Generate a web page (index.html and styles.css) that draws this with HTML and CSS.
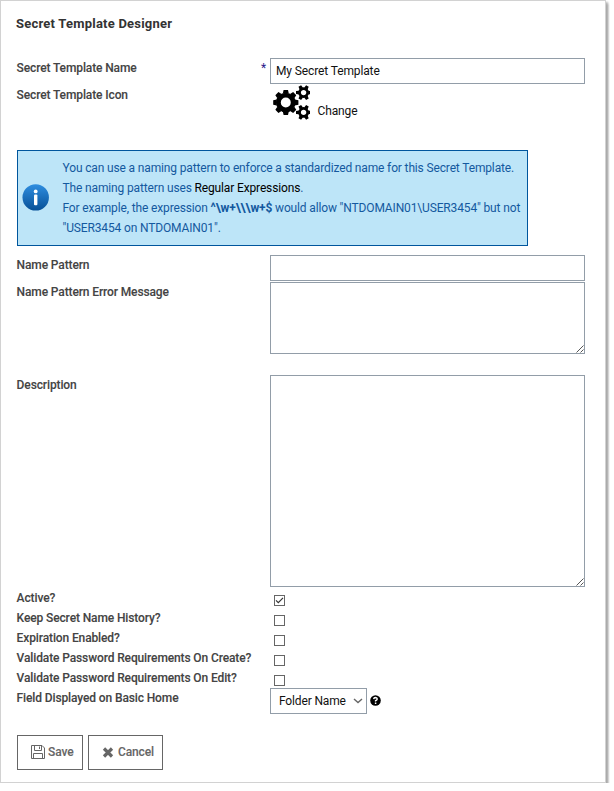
FILE: index.html
```html
<!DOCTYPE html>
<html lang="en">
<head>
<meta charset="utf-8">
<title>Secret Template Designer</title>
<link rel="stylesheet" href="styles.css">
</head>
<body>
<main class="panel">
  <h1 class="title">Secret Template Designer</h1>
  <form class="form">
    <div class="row row-name">
      <label class="label">Secret Template Name</label>
      <span class="required">*</span>
      <div class="input">My Secret Template</div>
    </div>
    <div class="row row-icon">
      <label class="label">Secret Template Icon</label>
      <div class="icon-field">
        <svg class="gears" viewBox="0 0 40 36" width="40" height="36">
          <defs>
            <g id="tooth"><path d="M-3-9 L-2.2-12.6 H2.2 L3-9Z M-3 9 L-2.2 12.6 H2.2 L3 9Z"/></g>
            <g id="small">
              <circle r="4" fill="none" stroke="#000" stroke-width="2.6"/>
              <path id="st" d="M-1.9-4.5 L-1.5-7.6 H1.5 L1.9-4.5Z M-1.9 4.5 L-1.5 7.6 H1.5 L1.9 4.5Z" transform="rotate(90)"/>
              <use href="#st" transform="rotate(60)"/>
              <use href="#st" transform="rotate(-60)"/>
            </g>
          </defs>
          <g transform="translate(15.8 17.5)">
            <circle r="7.4" fill="none" stroke="#000" stroke-width="4.8"/>
            <use href="#tooth"/>
            <use href="#tooth" transform="rotate(45)"/>
            <use href="#tooth" transform="rotate(90)"/>
            <use href="#tooth" transform="rotate(135)"/>
          </g>
          <use href="#small" transform="translate(33.6 7.6)"/>
          <use href="#small" transform="translate(33.6 27.4)"/>
        </svg>
        <a class="change">Change</a>
      </div>
    </div>
    <div class="info">
      <svg class="info-icon" viewBox="0 0 28 28" width="28" height="28">
        <defs><linearGradient id="blue" x1="0" y1="0" x2="0" y2="1"><stop offset="0" stop-color="#2f8ee0"/><stop offset="1" stop-color="#075097"/></linearGradient></defs>
        <circle cx="13.7" cy="14.4" r="13.2" fill="url(#blue)"/>
        <circle cx="13.7" cy="8.4" r="1.9" fill="#fff"/>
        <rect x="12" y="11.6" width="3.4" height="10.6" rx="1" fill="#fff"/>
      </svg>
      <div class="info-text">
        <div class="line">You can use a naming pattern to enforce a standardized name for this Secret Template.</div>
        <div class="line">The naming pattern uses <a>Regular Expressions</a>.</div>
        <div class="line">For example, the expression <b>^\w+\\\w+$</b> would allow "NTDOMAIN01\USER3454" but not</div>
        <div class="line">"USER3454 on NTDOMAIN01".</div>
      </div>
    </div>
    <div class="row row-pattern">
      <label class="label">Name Pattern</label>
      <div class="input"></div>
    </div>
    <div class="row row-error">
      <label class="label">Name Pattern Error Message</label>
      <div class="area"><svg class="grip" viewBox="0 0 8 8" width="8" height="8"><path d="M0.5 7.5 L7.5 0.5 M4.5 7.5 L7.5 4.5"/></svg></div>
    </div>
    <div class="row row-desc">
      <label class="label">Description</label>
      <div class="area"><svg class="grip" viewBox="0 0 8 8" width="8" height="8"><path d="M0.5 7.5 L7.5 0.5 M4.5 7.5 L7.5 4.5"/></svg></div>
    </div>
    <div class="row row-check"><label class="label">Active?</label><span class="box"><svg viewBox="0 0 9 9" width="9" height="9"><path d="M1 4.3 L3.3 6.6 L8 1.9"/></svg></span></div>
    <div class="row row-check"><label class="label">Keep Secret Name History?</label><span class="box"></span></div>
    <div class="row row-check"><label class="label">Expiration Enabled?</label><span class="box"></span></div>
    <div class="row row-check"><label class="label">Validate Password Requirements On Create?</label><span class="box"></span></div>
    <div class="row row-check"><label class="label">Validate Password Requirements On Edit?</label><span class="box"></span></div>
    <div class="row row-select">
      <label class="label">Field Displayed on Basic Home</label>
      <div class="select-field">
        <div class="select"><span>Folder Name</span><svg viewBox="0 0 10 6" width="10" height="6"><path d="M1 1 L5 4.6 L9 1"/></svg></div>
        <span class="help"><svg viewBox="0 0 11 11" width="11" height="11"><circle cx="5.5" cy="5.5" r="5.3"/><path d="M3.7 4.2 Q3.9 2.6 5.5 2.6 Q7.2 2.7 7.2 4.1 Q7.2 5 5.6 5.7 V6.6 M5.6 7.5 V8.9"/></svg></span>
      </div>
    </div>
    <div class="buttons">
      <div class="button save">
        <svg viewBox="0 0 14 14" width="14" height="14"><path d="M0.5 0.5 H11 L13.5 3 V13.5 H0.5Z M3.5 0.5 V5.5 H10.5 V0.5 M8.5 1.5 V4 M2.5 13.5 V8.5 H11.5 V13.5"/></svg>
        <span>Save</span>
      </div>
      <div class="button cancel">
        <svg viewBox="0 0 12 11" width="12" height="11"><path d="M2 1.5 L10 9.5 M10 1.5 L2 9.5"/></svg>
        <span>Cancel</span>
      </div>
    </div>
  </form>
</main>
</body>
</html>
```
FILE: styles.css
```css
* { box-sizing: border-box; }
body {
  margin: 0;
  background: #fff;
  font-family: Roboto, "Liberation Sans", sans-serif;
  font-size: 12px;
  line-height: 20px;
  letter-spacing: -0.12px;
  color: #111;
}
.panel {
  width: 606px;
  height: 783px;
  padding: 13px 16px 0;
  border: 1px solid #d2d2d2;
  background: #fff;
  box-shadow: 3px 3px 2px -1px #aaa, 2px 2px 2px #bbb;
}
.title {
  margin: 0 0 24px -1px;
  font-size: 13px;
  line-height: 20px;
  font-weight: 700;
  letter-spacing: 0.22px;
  color: #333;
}
.row {
  position: relative;
  display: grid;
  grid-template-columns: 253px 315px;
  align-items: start;
}
.label {
  margin-left: -0.4px;
  font-weight: 500;
  -webkit-text-stroke: 0.1px #444;
  color: #444;
  white-space: nowrap;
}
.required { position: absolute; left: 244px; top: 0; color: #2a1a8a; }
.input {
  grid-column: 2;
  height: 26px;
  padding: 0 5px;
  border: 1px solid #929da8;
  line-height: 24px;
}
.row-icon { height: 65px; margin-top: 1px; }
.icon-field { display: flex; }
.gears { display: block; }
.change { margin: 16px 0 0 7.5px; }
.info {
  display: flex;
  width: 511px;
  height: 96px;
  padding: 7px 0 0 4px;
  border: 1px solid #00569d;
  background: #bde5f8;
  color: #14599f;
  letter-spacing: -0.145px;
}
.info-icon { margin-top: 25px; flex: none; }
.info-text { margin-left: 12.5px; white-space: nowrap; }
.info-text a { color: #000; }
.row-pattern { margin-top: 9px; }
.row-error { height: 93px; margin-top: 1px; }
.row-desc { height: 213px; }
.area { position: relative; border: 1px solid #929da8; }
.row-error .area { height: 72px; }
.row-desc .area { height: 212px; }
.grip { position: absolute; right: 0; bottom: 0; fill: none; stroke: #555; stroke-width: 1; }
.row-check { height: 20px; }
.box {
  width: 11px;
  height: 11px;
  margin: 7px 0 0 4px;
  border: 1px solid #666;
  display: flex;
}
.box svg { fill: none; stroke: #333; stroke-width: 1.2; }
.select-field { display: flex; align-items: center; }
.select {
  display: flex;
  align-items: center;
  justify-content: space-between;
  width: 97px;
  height: 26px;
  padding: 0 3px 0 8px;
  border: 1px solid #929da8;
  letter-spacing: -0.15px;
}
.select svg { fill: none; stroke: #666; stroke-width: 1.4; }
.help { display: flex; margin: -1px 0 0 3px; }
.help path { fill: none; stroke: #fff; stroke-width: 1.5; }
.buttons { display: flex; gap: 5px; margin-top: 21px; }
.button {
  display: flex;
  align-items: center;
  height: 35px;
  border: 1px solid #666;
  color: #666;
  font-weight: 500;
  -webkit-text-stroke: 0.1px #666;
}
.button span { margin-top: -2px; }
.save { width: 66px; padding-left: 13px; gap: 3px; }
.cancel { width: 75px; padding-left: 13px; gap: 4px; }
.button svg { fill: none; stroke: #666; }
.save svg { margin-top: -1px; }
.cancel path { stroke-width: 3.2; }
```
